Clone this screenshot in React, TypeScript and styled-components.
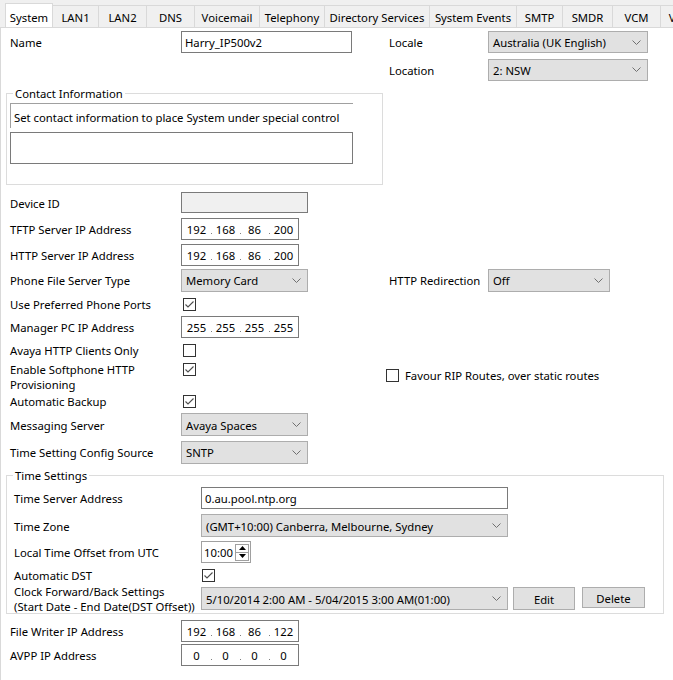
import styled, { createGlobalStyle } from 'styled-components';

const FONT = `'Noto Sans', 'Liberation Sans', Arial, sans-serif`;

const GlobalStyle = createGlobalStyle`
  html, body {
    margin: 0;
    padding: 0;
    background: #ffffff;
  }
  body {
    font-family: ${FONT};
    font-size: 11.3px;
    color: #000000;
  }
  * {
    box-sizing: border-box;
  }
`;

const Window = styled.div`
  width: 673px;
  height: 680px;
  overflow: hidden;
  background: #ffffff;
  display: flex;
  flex-direction: column;
`;

const TabBar = styled.div`
  height: 28px;
  flex-shrink: 0;
  display: flex;
  align-items: flex-end;
  padding-left: 5px;
  background: #f0f0f0;
  border-bottom: 1px solid #d9d9d9;
  white-space: nowrap;
  overflow: hidden;
`;

const Tab = styled.div<{ $w: number; $active?: boolean }>`
  width: ${({ $w }) => $w}px;
  flex-shrink: 0;
  height: ${({ $active }) => ($active ? 25 : 22)}px;
  margin-bottom: ${({ $active }) => ($active ? -1 : 0)}px;
  padding-top: ${({ $active }) => ($active ? 2 : 2)}px;
  display: flex;
  align-items: center;
  justify-content: center;
  background: ${({ $active }) => ($active ? '#ffffff' : '#f0f0f0')};
  border: 1px solid #d9d9d9;
  border-bottom: none;
  margin-right: -1px;
  position: relative;
  z-index: ${({ $active }) => ($active ? 1 : 0)};
`;

const Page = styled.div`
  flex: 1;
  border-left: 1px solid #d9d9d9;
  padding-left: 5px;
`;

const TopSection = styled.div`
  display: flex;
  padding-left: 4px;
`;

const TopLeft = styled.div`
  width: 379px;
  flex-shrink: 0;
`;

const Column = styled.div`
  display: flex;
  flex-direction: column;
`;

const Row = styled.div<{ $h: number; $top?: boolean }>`
  display: flex;
  align-items: ${({ $top }) => ($top ? 'flex-start' : 'center')};
  height: ${({ $h }) => $h}px;
`;

const Main = styled.div<{ $top?: boolean }>`
  width: 376px;
  flex-shrink: 0;
  display: flex;
  align-items: ${({ $top }) => ($top ? 'flex-start' : 'center')};
`;

const Side = styled.div<{ $inset?: number; $dy?: number }>`
  display: flex;
  align-items: center;
  padding-left: ${({ $inset = 0 }) => $inset}px;
  margin-top: ${({ $dy = 0 }) => $dy}px;
`;

const Label = styled.div<{ $w: number; $pad?: number }>`
  width: ${({ $w }) => $w}px;
  flex-shrink: 0;
  line-height: 15px;
  padding-top: 1px;
  padding-left: ${({ $pad = 0 }) => $pad}px;
  white-space: nowrap;
`;

const TextInput = styled.div<{ $w: number; $h?: number; $disabled?: boolean }>`
  width: ${({ $w }) => $w}px;
  height: ${({ $h = 22 }) => $h}px;
  border: 1px solid #7a7a7a;
  background: ${({ $disabled }) => ($disabled ? '#f0f0f0' : '#ffffff')};
  padding: 1px 0 0 3px;
  display: flex;
  align-items: center;
  white-space: nowrap;
  overflow: hidden;
`;

const SelectBox = styled.div<{ $w: number; $h?: number }>`
  width: ${({ $w }) => $w}px;
  height: ${({ $h = 23 }) => $h}px;
  border: 1px solid #adadad;
  background: #e1e1e1;
  padding: 1px 6px 0 4px;
  display: flex;
  align-items: center;
  justify-content: space-between;
  white-space: nowrap;
  overflow: hidden;
`;

const Chevron = () => (
  <svg width="9" height="6" viewBox="0 0 9 6">
    <polyline points="0.5,0.5 4.5,4.5 8.5,0.5" fill="none" stroke="#707070" strokeWidth="1" />
  </svg>
);

const Select = ({ w, h, value }: { w: number; h?: number; value: string }) => (
  <SelectBox $w={w} $h={h}>
    <span>{value}</span>
    <Chevron />
  </SelectBox>
);

const IpBox = styled.div`
  width: 118px;
  height: 22px;
  border: 1px solid #7a7a7a;
  padding-top: 1px;
  display: grid;
  grid-template-columns: 1fr 1fr 1fr 1fr;
  align-items: center;
`;

const Octet = styled.span<{ $dot?: boolean }>`
  position: relative;
  text-align: center;
  &::after {
    content: '';
    display: ${({ $dot }) => ($dot ? 'block' : 'none')};
    position: absolute;
    right: -1px;
    bottom: 3px;
    width: 1px;
    height: 1px;
    background: #808080;
  }
`;

const IpField = ({ parts }: { parts: string[] }) => (
  <IpBox>
    {parts.map((p, i) => (
      <Octet key={i} $dot={i < 3}>
        {p}
      </Octet>
    ))}
  </IpBox>
);

const CheckFrame = styled.div<{ $dx?: number; $dy?: number }>`
  width: 13px;
  height: 13px;
  flex-shrink: 0;
  border: 1px solid #333333;
  background: #ffffff;
  margin-left: ${({ $dx = 2 }) => $dx}px;
  margin-top: ${({ $dy = 0 }) => $dy}px;
  display: flex;
  align-items: center;
  justify-content: center;
`;

const Check = ({ on, dx, dy }: { on?: boolean; dx?: number; dy?: number }) => (
  <CheckFrame $dx={dx} $dy={dy}>
    {on && (
      <svg width="11" height="11" viewBox="0 0 11 11">
        <polyline points="1.5,5.5 4,8 9.5,2.5" fill="none" stroke="#4d4d4d" strokeWidth="1.1" />
      </svg>
    )}
  </CheckFrame>
);

const GroupBox = styled.fieldset<{ $w: number }>`
  width: ${({ $w }) => $w}px;
  margin: 3px 0 0 0;
  border: 1px solid #dcdcdc;
  padding: 0 3px 0 3px;
  min-width: 0;
`;

const Legend = styled.legend`
  padding: 1px 2px 0 2px;
  margin-left: 3px;
  line-height: 14px;
  font-size: inherit;
`;

const InfoLine = styled.div`
  width: 343px;
  height: 25px;
  margin-top: 2px;
  border-top: 1px solid #a0a0a0;
  border-left: 1px solid #a0a0a0;
  padding: 3px 0 0 3px;
  display: flex;
  align-items: center;
  white-space: nowrap;
`;

const TextArea = styled.div`
  width: 343px;
  height: 32px;
  margin: 4px 0 20px 0;
  border: 1px solid #7a7a7a;
`;

const Rows = styled.div<{ $mt?: number; $mb?: number }>`
  display: flex;
  flex-direction: column;
  margin-top: ${({ $mt = 0 }) => $mt}px;
  margin-bottom: ${({ $mb = 0 }) => $mb}px;
  padding-left: 4px;
`;

const Spinner = styled.div`
  width: 50px;
  height: 22px;
  border: 1px solid #a0a0a0;
  display: flex;
  align-items: center;
  justify-content: space-between;
  padding: 1px 1px 0 2px;
`;

const SpinStack = styled.div`
  display: flex;
  flex-direction: column;
  margin-top: -1px;
`;

const SpinButton = styled.div`
  width: 14px;
  height: 9px;
  border: 1px solid #a0a0a0;
  background: #ffffff;
  display: flex;
  align-items: center;
  justify-content: center;
  & + & {
    margin-top: -1px;
  }
`;

const Arrow = ({ up }: { up?: boolean }) => (
  <svg width="7" height="4" viewBox="0 0 7 4">
    <polygon points={up ? '0,4 7,4 3.5,0' : '0,0 7,0 3.5,4'} fill="#000000" />
  </svg>
);

const Button = styled.div<{ $w: number; $h: number }>`
  width: ${({ $w }) => $w}px;
  height: ${({ $h }) => $h}px;
  border: 1px solid #adadad;
  background: #e1e1e1;
  padding-top: 1px;
  display: flex;
  align-items: center;
  justify-content: center;
  flex-shrink: 0;
`;

const ButtonGroup = styled.div`
  display: flex;
  align-items: flex-start;
  height: 23px;
  gap: 7px;
  margin-left: 5px;
`;

const tabs: [string, number][] = [
  ['System', 48],
  ['LAN1', 47],
  ['LAN2', 49],
  ['DNS', 49],
  ['Voicemail', 66],
  ['Telephony', 66],
  ['Directory Services', 106],
  ['System Events', 88],
  ['SMTP', 47],
  ['SMDR', 51],
  ['VCM', 49],
  ['Visual Voice', 80],
];

export default function App() {
  return (
    <>
      <GlobalStyle />
      <Window>
        <TabBar>
          {tabs.map(([name, w], i) => (
            <Tab key={name} $w={w} $active={i === 0}>
              {name}
            </Tab>
          ))}
        </TabBar>
        <Page>
          <TopSection>
            <TopLeft>
              <Row $h={28}>
                <Label $w={171}>Name</Label>
                <TextInput $w={171}>Harry_IP500v2</TextInput>
              </Row>
            </TopLeft>
            <Column>
              <Row $h={28}>
                <Label $w={99}>Locale</Label>
                <Select w={160} h={22} value="Australia (UK English)" />
              </Row>
              <Row $h={27}>
                <Label $w={99}>Location</Label>
                <Select w={160} h={22} value="2: NSW" />
              </Row>
            </Column>
          </TopSection>

          <GroupBox $w={377}>
            <Legend>Contact Information</Legend>
            <InfoLine>Set contact information to place System under special control</InfoLine>
            <TextArea />
          </GroupBox>

          <Rows $mt={4}>
            <Row $h={27}>
              <Label $w={171}>Device ID</Label>
              <TextInput $w={127} $h={21} $disabled />
            </Row>
            <Row $h={26}>
              <Label $w={171}>TFTP Server IP Address</Label>
              <IpField parts={['192', '168', '86', '200']} />
            </Row>
            <Row $h={25}>
              <Label $w={171}>HTTP Server IP Address</Label>
              <IpField parts={['192', '168', '86', '200']} />
            </Row>
            <Row $h={26}>
              <Main>
                <Label $w={171}>Phone File Server Type</Label>
                <Select w={127} value="Memory Card" />
              </Main>
              <Side $inset={3}>
                <Label $w={99}>HTTP Redirection</Label>
                <Select w={122} value="Off" />
              </Side>
            </Row>
            <Row $h={22}>
              <Label $w={171}>Use Preferred Phone Ports</Label>
              <Check on />
            </Row>
            <Row $h={24}>
              <Label $w={171}>Manager PC IP Address</Label>
              <IpField parts={['255', '255', '255', '255']} />
            </Row>
            <Row $h={22}>
              <Label $w={171}>Avaya HTTP Clients Only</Label>
              <Check />
            </Row>
            <Row $h={31} $top>
              <Main $top>
                <Label $w={171}>
                  Enable Softphone HTTP
                  <br />
                  Provisioning
                </Label>
                <Check on dy={2} />
              </Main>
              <Side $dy={6}>
                <Check dx={0} />
                <Label $w={220} $pad={6}>
                  Favour RIP Routes, over static routes
                </Label>
              </Side>
            </Row>
            <Row $h={18}>
              <Label $w={171}>Automatic Backup</Label>
              <Check on />
            </Row>
            <Row $h={29}>
              <Label $w={171}>Messaging Server</Label>
              <Select w={127} value="Avaya Spaces" />
            </Row>
            <Row $h={26}>
              <Label $w={171}>Time Setting Config Source</Label>
              <Select w={127} value="SNTP" />
            </Row>
          </Rows>

          <GroupBox $w={658}>
            <Legend>Time Settings</Legend>
            <Rows $mt={1} $mb={1}>
              <Row $h={28}>
                <Label $w={187}>Time Server Address</Label>
                <TextInput $w={307}>0.au.pool.ntp.org</TextInput>
              </Row>
              <Row $h={27}>
                <Label $w={187}>Time Zone</Label>
                <Select w={307} value="(GMT+10:00) Canberra, Melbourne, Sydney" />
              </Row>
              <Row $h={26}>
                <Label $w={187}>Local Time Offset from UTC</Label>
                <Spinner>
                  <span>10:00</span>
                  <SpinStack>
                    <SpinButton>
                      <Arrow up />
                    </SpinButton>
                    <SpinButton>
                      <Arrow />
                    </SpinButton>
                  </SpinStack>
                </Spinner>
              </Row>
              <Row $h={20}>
                <Label $w={187}>Automatic DST</Label>
                <Check on dx={1} />
              </Row>
              <Row $h={27}>
                <Label $w={187}>
                  Clock Forward/Back Settings
                  <br />
                  (Start Date - End Date(DST Offset))
                </Label>
                <Select w={307} value="5/10/2014 2:00 AM - 5/04/2015 3:00 AM(01:00)" />
                <ButtonGroup>
                  <Button $w={62} $h={23}>Edit</Button>
                  <Button $w={63} $h={21}>Delete</Button>
                </ButtonGroup>
              </Row>
            </Rows>
          </GroupBox>

          <Rows $mt={3}>
            <Row $h={27}>
              <Label $w={171}>File Writer IP Address</Label>
              <IpField parts={['192', '168', '86', '122']} />
            </Row>
            <Row $h={22}>
              <Label $w={171}>AVPP IP Address</Label>
              <IpField parts={['0', '0', '0', '0']} />
            </Row>
          </Rows>
        </Page>
      </Window>
    </>
  );
}
